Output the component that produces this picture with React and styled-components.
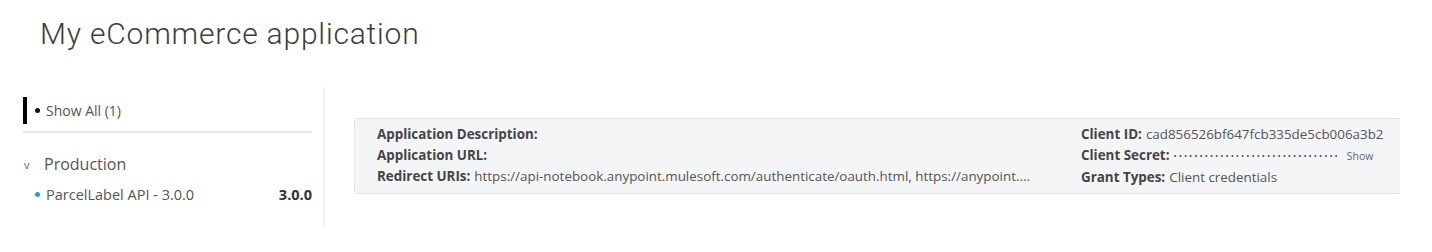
import React from "react";
import styled, { createGlobalStyle } from "styled-components";

const GlobalStyle = createGlobalStyle`
  body {
    margin: 0;
    background: #fff;
    font-family: "Open Sans", "Liberation Sans", sans-serif;
    color: #555;
  }
`;

const Page = styled.div`
  width: 1432px;
  height: 252px;
  overflow: hidden;
`;

const Title = styled.h1`
  margin: 0;
  padding: 16px 0 0 40px;
  height: 87px;
  box-sizing: border-box;
  font-family: Roboto, "DejaVu Sans", sans-serif;
  font-weight: 300;
  font-size: 30px;
  letter-spacing: 0.8px;
  color: #3d3d3d;
`;

const Body = styled.div`
  display: flex;
`;

const Sidebar = styled.aside`
  width: 289px;
  padding: 10px 11px 0 23px;
  border-right: 2px solid #f0f0f0;
  height: 129px;
`;

const FilterRow = styled.div`
  display: flex;
  align-items: center;
  height: 27px;
  border-left: 4px solid #000;
  padding-left: 8px;
  font-size: 14px;
  color: #555;
`;

const Dot = styled.span`
  width: 5px;
  height: 5px;
  border-radius: 50%;
  background: ${(p) => p.color};
  margin-right: 6px;
  flex: none;
`;

const Divider = styled.hr`
  margin: 7px 0 0;
  border: 0;
  border-top: 2px solid #e6e6e6;
  width: 289px;
`;

const GroupHeader = styled.div`
  display: flex;
  align-items: center;
  margin-top: 20px;
  height: 22px;
  font-size: 16px;
  color: #555;
`;

const Chevron = styled.span`
  font-size: 11px;
  width: 20px;
  color: #666;
  padding-left: 1px;
`;

const ApiRow = styled.div`
  display: flex;
  align-items: center;
  justify-content: space-between;
  width: 289px;
  margin-top: 10px;
  padding-left: 12px;
  box-sizing: border-box;
  font-size: 14.5px;
  color: #555;
`;

const ApiName = styled.span`
  display: flex;
  align-items: center;
`;

const Version = styled.span`
  font-weight: 700;
  color: #333;
`;

const Main = styled.main`
  padding: 31px 0 0 29px;
  width: 1046px;
  overflow: hidden;
`;

const Panel = styled.div`
  display: flex;
  justify-content: space-between;
  width: 1080px;
  padding: 5px 0 5px 22px;
  box-sizing: border-box;
  background: #f4f5f7;
  border: 1px solid #e2e3e6;
  border-radius: 3px;
  font-size: 13.4px;
  line-height: 21px;
`;

const Column = styled.div`
  width: ${(p) => p.width}px;
`;

const Field = styled.div`
  white-space: nowrap;
  color: #555;
`;

const Label = styled.span`
  font-weight: 700;
  color: #444;
  margin-right: 4px;
`;

const Secret = styled.span`
  font-size: 8.5px;
  letter-spacing: 2px;
  color: #555;
  vertical-align: 1px;
`;

const ShowLink = styled.span`
  font-size: 10.5px;
  color: #666;
  margin-left: 7px;
`;

export default function App() {
  return (
    <Page>
      <GlobalStyle />
      <Title>My eCommerce application</Title>
      <Body>
        <Sidebar>
          <FilterRow>
            <Dot color="#111" />
            Show All (1)
          </FilterRow>
          <Divider />
          <GroupHeader>
            <Chevron>v</Chevron>
            Production
          </GroupHeader>
          <ApiRow>
            <ApiName>
              <Dot color="#1a9fe0" />
              ParcelLabel API - 3.0.0
            </ApiName>
            <Version>3.0.0</Version>
          </ApiRow>
        </Sidebar>
        <Main>
          <Panel>
            <Column width={704}>
              <Field>
                <Label>Application Description:</Label>
              </Field>
              <Field>
                <Label>Application URL:</Label>
              </Field>
              <Field>
                <Label>Redirect URIs:</Label>
                https://api-notebook.anypoint.mulesoft.com/authenticate/oauth.html, https://anypoint....
              </Field>
            </Column>
            <Column width={352}>
              <Field>
                <Label>Client ID:</Label>
                cad856526bf647fcb335de5cb006a3b2
              </Field>
              <Field>
                <Label>Client Secret:</Label>
                <Secret>••••••••••••••••••••••••••••••••</Secret>
                <ShowLink>Show</ShowLink>
              </Field>
              <Field>
                <Label>Grant Types:</Label>
                Client credentials
              </Field>
            </Column>
          </Panel>
        </Main>
      </Body>
    </Page>
  );
}
